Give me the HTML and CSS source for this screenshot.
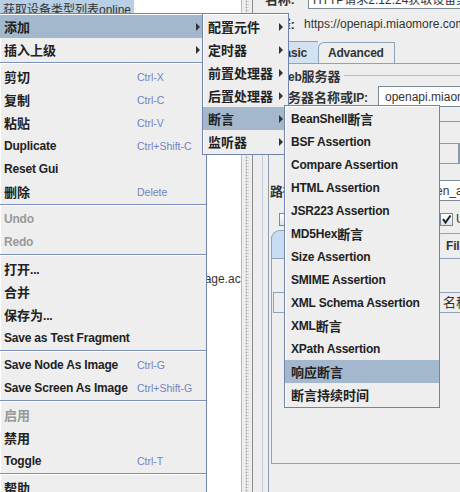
FILE: index.html
```html
<!DOCTYPE html>
<html>
<head>
<meta charset="utf-8">
<link rel="stylesheet" href="styles.css">
</head>
<body>
<div class="app">
  <div class="tree">
    <div class="node first"><span class="node-sel">获取设备类型列表online</span></div>
    <div class="node second">page.action</div>
  </div>
  <div class="splitter"></div>
  <div class="right">
    <div class="r-row r-name"><span class="lbl zh">名称:</span><div class="tf name-tf">HTTP请求2.12.24获取设备类型列表online</div></div>
    <div class="r-row r-comment"><span class="lbl zh">注释:</span><span class="comment">https://openapi.miaomore.com/api/device/type/list</span></div>
    <div class="frame">
      <div class="frame2">
        <div class="tabs top-tabs">
          <div class="tab basic">Basic</div>
          <div class="tab adv">Advanced</div>
        </div>
        <div class="tabbody">
          <div class="gtitle"><span class="gt-text">Web<span class="zh">服务器</span></span><span class="gt-line"></span></div>
          <div class="srv-row"><span class="lbl"><span class="zh">服务器名称或</span>IP:</span><div class="tf srv-tf">openapi.miaomore.com</div></div>
          <div class="group2">
            <div class="box-row"><div class="box b1"></div><div class="box b2"></div></div>
            <div class="path-row"><span class="lbl zh">路径:</span><div class="tf path-tf">en_app/getDeviceTypeList</div></div>
            <div class="cb-row">
              <div class="cb-item"><span class="cb"></span></div>
              <div class="cb-item"><span class="cb"><svg width="11" height="11" viewBox="0 0 11 11"><path d="M2 5 L4.5 8.5 L9.5 1.5" fill="none" stroke="#222" stroke-width="2"/></svg></span><span class="cb-lbl">Use KeepAlive</span></div>
            </div>
            <div class="tabs low-tabs">
              <div class="tab t-par"></div>
              <div class="tab t-body"></div>
              <div class="tab t-files">Files Upload</div>
            </div>
            <div class="tabpanel">
              <div class="thead"><div class="th"></div><div class="th th2">名称:</div></div>
            </div>
          </div>
        </div>
      </div>
    </div>
  </div>
</div>

<div class="menu main">
  <div class="mi hl"><span class="lab zh">添加</span><i class="arr"></i></div>
  <div class="mi"><span class="lab zh">插入上级</span><i class="arr"></i></div>
  <div class="sep"></div>
  <div class="mi"><span class="lab zh">剪切</span><span class="acc">Ctrl-X</span></div>
  <div class="mi"><span class="lab zh">复制</span><span class="acc">Ctrl-C</span></div>
  <div class="mi"><span class="lab zh">粘贴</span><span class="acc">Ctrl-V</span></div>
  <div class="mi"><span class="lab">Duplicate</span><span class="acc">Ctrl+Shift-C</span></div>
  <div class="mi"><span class="lab">Reset Gui</span></div>
  <div class="mi"><span class="lab zh">删除</span><span class="acc">Delete</span></div>
  <div class="sep"></div>
  <div class="mi dis"><span class="lab">Undo</span></div>
  <div class="mi dis"><span class="lab">Redo</span></div>
  <div class="sep"></div>
  <div class="mi"><span class="lab"><span class="zh">打开</span>...</span></div>
  <div class="mi"><span class="lab zh">合并</span></div>
  <div class="mi"><span class="lab"><span class="zh">保存为</span>...</span></div>
  <div class="mi"><span class="lab">Save as Test Fragment</span></div>
  <div class="sep"></div>
  <div class="mi"><span class="lab">Save Node As Image</span><span class="acc">Ctrl-G</span></div>
  <div class="mi"><span class="lab">Save Screen As Image</span><span class="acc">Ctrl+Shift-G</span></div>
  <div class="sep"></div>
  <div class="mi dis"><span class="lab zh">启用</span></div>
  <div class="mi"><span class="lab zh">禁用</span></div>
  <div class="mi"><span class="lab">Toggle</span><span class="acc">Ctrl-T</span></div>
  <div class="sep"></div>
  <div class="mi"><span class="lab zh">帮助</span></div>
</div>

<div class="menu sub1">
  <div class="mi"><span class="lab zh">配置元件</span><i class="arr"></i></div>
  <div class="mi"><span class="lab zh">定时器</span><i class="arr"></i></div>
  <div class="mi"><span class="lab zh">前置处理器</span><i class="arr"></i></div>
  <div class="mi"><span class="lab zh">后置处理器</span><i class="arr"></i></div>
  <div class="mi hl"><span class="lab zh">断言</span><i class="arr"></i></div>
  <div class="mi"><span class="lab zh">监听器</span><i class="arr"></i></div>
</div>

<div class="menu sub2">
  <div class="mi">BeanShell<span class="zh">断言</span></div>
  <div class="mi">BSF Assertion</div>
  <div class="mi">Compare Assertion</div>
  <div class="mi">HTML Assertion</div>
  <div class="mi">JSR223 Assertion</div>
  <div class="mi">MD5Hex<span class="zh">断言</span></div>
  <div class="mi">Size Assertion</div>
  <div class="mi">SMIME Assertion</div>
  <div class="mi">XML Schema Assertion</div>
  <div class="mi">XML<span class="zh">断言</span></div>
  <div class="mi">XPath Assertion</div>
  <div class="mi hl"><span class="zh">响应断言</span></div>
  <div class="mi"><span class="zh">断言持续时间</span></div>
</div>
</body>
</html>
```

FILE: styles.css
```css
* { box-sizing: border-box; }

body {
  margin: 0;
  width: 460px;
  height: 492px;
  overflow: hidden;
  position: relative;
  background: #eeeeee;
  color: #333333;
  font-family: "Liberation Sans", "Noto Sans CJK SC", sans-serif;
  font-size: 12px;
}

.zh { font-size: 13px; letter-spacing: 0; }

/* ---------- background window ---------- */
.app { display: flex; height: 492px; }

.tree {
  width: 241px;
  flex: none;
  background: #ffffff;
  overflow: hidden;
}
.node {
  height: 17px;
  line-height: 17px;
  white-space: nowrap;
  color: #333333;
}
.node.first { height: 18px; line-height: 20px; }
.node-sel {
  display: inline-block;
  height: 18px;
  background: #b8cfe5;
  padding: 0 3px;
}
.node.second { margin-top: 253px; padding-left: 198px; }

.splitter {
  width: 12px;
  flex: none;
  border-left: 1px solid #b9b9b9;
  border-right: 1px solid #8c8c8c;
  padding: 0 3px;
  background-color: #ececec;
  background-image: radial-gradient(circle, #a4a4a4 0.8px, transparent 1.1px);
  background-size: 3px 3px;
  background-clip: content-box;
}

.right {
  flex: 1;
  min-width: 0;
  overflow: hidden;
  background: #eeeeee;
}
.r-row {
  display: flex;
  align-items: center;
  padding-left: 12px;
  white-space: nowrap;
}
.lbl { font-weight: bold; flex: none; letter-spacing: -0.2px; }
.r-name { height: 21px; margin-top: -12px; }
.r-name .lbl, .r-comment .lbl { width: 32px; }
.tf {
  flex: none;
  height: 21px;
  display: flex;
  align-items: center;
  padding-left: 4px;
  background: #ffffff;
  border: 1px solid #7a8a99;
  white-space: nowrap;
  overflow: hidden;
  color: #333333;
}
.name-tf { margin-left: 11px; width: 220px; }
.r-comment { height: 21px; margin-top: 4px; }
.comment { margin-left: 7px; }

.frame {
  margin-top: 2px;
  margin-left: 9px;
  padding-top: 5px;
  padding-left: 5px;
  border-left: 1px solid #c2ccd8;
  height: 460px;
}
.frame2 {
  height: 100%;
  border-left: 1px solid #8e9cad;
  padding-left: 2px;
}

.tabs { display: flex; align-items: flex-end; }
.tab {
  flex: none;
  display: flex;
  align-items: center;
  white-space: nowrap;
  overflow: hidden;
  font-weight: bold;
  letter-spacing: -0.2px;
  background: #eeeeee;
  border: 1px solid #8da2bb;
  border-bottom: none;
  border-top-left-radius: 6px;
}
.top-tabs { height: 22px; }
.basic {
  width: 47px;
  height: 22px;
  padding-left: 4px;
  border-right: none;
  background: #d3e2f1;
}
.adv { width: 77px; height: 21px; padding-left: 9px; }

.tabbody { border-top: 1px solid #8da2bb; padding-top: 4px; }
.gtitle {
  display: flex;
  align-items: center;
  height: 14px;
  padding-left: 6px;
  white-space: nowrap;
}
.gt-text { font-weight: bold; letter-spacing: -0.2px; }
.gt-line { flex: 1; border-top: 1px solid #b5c0cd; margin-left: 3px; }

.srv-row {
  display: flex;
  align-items: center;
  height: 21px;
  margin-top: 4px;
  padding-left: 4px;
  white-space: nowrap;
}
.srv-row .lbl { width: 103px; }
.srv-tf { width: 160px; padding-left: 6px; }

.group2 { margin-top: 14px; border-top: 1px solid #8c9bab; }
.box-row { display: flex; height: 21px; margin-top: 21px; }
.box { height: 21px; border: 1px solid #8c9bab; }
.b1 { margin-left: 29px; width: 159px; flex: none; }
.b2 { flex: 1; border-left: none; }

.path-row {
  display: flex;
  align-items: center;
  height: 21px;
  margin-top: 16px;
  margin-left: -1px;
  white-space: nowrap;
}
.path-row .lbl { width: 34px; }
.path-tf { width: 320px; padding-left: 131px; }

.cb-row {
  display: grid;
  grid-template-columns: 161px auto;
  align-items: center;
  height: 14px;
  margin-top: 11px;
  padding-left: 8px;
}
.cb-item {
  display: flex;
  align-items: center;
  gap: 3px;
  white-space: nowrap;
  overflow: hidden;
}
.cb {
  flex: none;
  display: block;
  width: 13px;
  height: 13px;
  border: 1px solid #7a8a99;
  background: linear-gradient(#ffffff, #dbe4ee);
}
.cb svg { display: block; }

.low-tabs { height: 28px; margin-top: 4px; }
.t-par {
  width: 88px;
  height: 28px;
  border-right: none;
  border-top-left-radius: 9px;
  background: #c8ddf2;
}
.t-body { width: 77px; height: 25px; border-right: none; }
.t-files { width: 100px; height: 25px; padding-left: 9px; }

.tabpanel {
  height: 206px;
  border: 1px solid #8da2bb;
  border-right: none;
  padding-left: 1px;
}
.thead {
  display: grid;
  grid-template-columns: 165px 1fr;
  height: 21px;
  margin-top: 33px;
}
.th {
  border: 1px solid #8da2bb;
  padding-left: 5px;
  line-height: 19px;
  font-size: 13px;
  white-space: nowrap;
}
.th2 { border-left: none; }

/* ---------- popup menus ---------- */
.menu {
  position: absolute;
  background: #eeeeee;
  border: 1px solid #6f83ad;
  box-shadow: inset 1px 1px 0 #ffffff;
  padding-top: 1px;
  padding-bottom: 1px;
  color: #222222;
}
.mi {
  height: 23px;
  align-items: center;
  white-space: nowrap;
  font-weight: bold;
  letter-spacing: -0.2px;
}
.mi.hl { background: #a3b8cc; }
.mi.dis { color: #999999; }
.lab { grid-column: 1; }
.acc {
  grid-column: 2;
  font-weight: normal;
  font-size: 10.5px;
  letter-spacing: 0;
  color: #6f84bf;
}
.arr {
  grid-column: 3;
  width: 0;
  height: 0;
  border-top: 4px solid transparent;
  border-bottom: 4px solid transparent;
  border-left: 4px solid #333333;
}
.sep {
  height: 2px;
  margin: 1px 0;
  border-top: 1px solid #7c90bf;
  border-bottom: 1px solid #ffffff;
}

.main { left: -1px; top: 13px; width: 208px; }
.main .mi {
  display: grid;
  grid-template-columns: 133px 59px 10px;
  padding-left: 4px;
}

.sub1 { left: 202px; top: 13px; width: 87px; }
.sub1 .mi {
  display: grid;
  grid-template-columns: 1fr 9px;
  padding-left: 5px;
}
.sub1 .arr { grid-column: 2; }

.sub2 { left: 284px; top: 105px; width: 156px; }
.sub2 .mi { display: flex; padding-left: 6px; }
```
